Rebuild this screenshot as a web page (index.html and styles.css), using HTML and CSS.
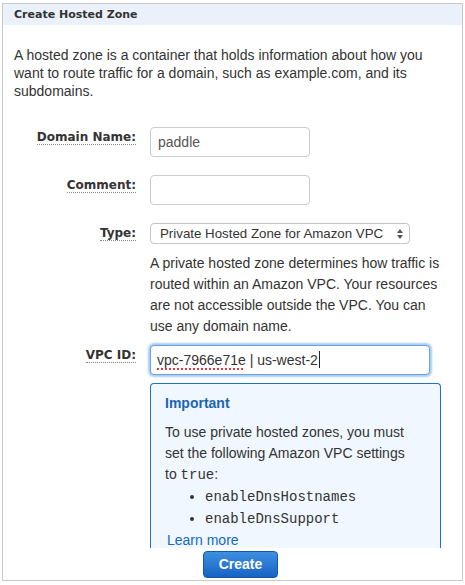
FILE: index.html
```html
<!DOCTYPE html>
<html lang="en">
<head>
<meta charset="utf-8">
<title>Create Hosted Zone</title>
<link rel="stylesheet" href="styles.css">
</head>
<body>
<div class="panel">
  <div class="panel-header">Create Hosted Zone</div>
  <p class="intro">A hosted zone is a container that holds information about how you want to route traffic for a domain, such as example.com, and its subdomains.</p>
  <div class="form">
    <div class="field field-domain">
      <div class="label"><span>Domain Name:</span></div>
      <div class="control"><div class="input input-short">paddle</div></div>
    </div>
    <div class="field field-comment">
      <div class="label"><span>Comment:</span></div>
      <div class="control"><div class="input input-short"></div></div>
    </div>
    <div class="field field-type">
      <div class="label"><span>Type:</span></div>
      <div class="control">
        <div class="select">
          <span class="select-text">Private Hosted Zone for Amazon VPC</span>
          <svg class="select-arrows" width="8" height="12" viewBox="0 0 8 12"><path d="M4 1 L7 5 L1 5 Z" fill="#555"/><path d="M4 11 L7 7 L1 7 Z" fill="#555"/></svg>
        </div>
        <p class="help">A private hosted zone determines how traffic is routed within an Amazon VPC. Your resources are not accessible outside the VPC. You can use any domain name.</p>
      </div>
    </div>
    <div class="field field-vpc">
      <div class="label"><span>VPC ID:</span></div>
      <div class="control">
        <div class="input input-focus"><span class="misspelled">vpc-7966e71e</span> | us-west-2<span class="caret"></span></div>
        <div class="notice">
          <div class="notice-title">Important</div>
          <p class="notice-text">To use private hosted zones, you must set the following Amazon VPC settings to <code>true</code>:</p>
          <ul class="notice-list">
            <li><code>enableDnsHostnames</code></li>
            <li><code>enableDnsSupport</code></li>
          </ul>
          <a class="notice-link" href="#">Learn more</a>
        </div>
      </div>
    </div>
  </div>
  <div class="actions">
    <button class="btn-primary" type="button">Create</button>
  </div>
</div>
</body>
</html>
```

FILE: styles.css
```css
* { box-sizing: border-box; }

html, body {
  margin: 0;
  padding: 0;
  background: #ffffff;
}

body {
  font-family: "Liberation Sans", Arial, Helvetica, sans-serif;
  color: #333333;
}

.panel {
  margin: 3px 0 0 2px;
  width: 461px;
  height: 578px;
  border: 1px solid #c9c9c9;
  overflow: hidden;
}

.panel-header {
  height: 21px;
  line-height: 21px;
  padding-left: 11px;
  background: #eaf1fb;
  font-family: "DejaVu Sans", Verdana, sans-serif;
  font-weight: bold;
  font-size: 11px;
  color: #333333;
}

.intro {
  margin: 21px 0 0 0;
  padding: 0 20px 0 11px;
  font-size: 14px;
  line-height: 18px;
  color: #333333;
}

.form {
  margin-top: 27px;
}

.field {
  display: flex;
  align-items: flex-start;
  gap: 14px;
}

.field-domain,
.field-comment { margin-bottom: 18px; }

.field-type { margin-bottom: 8px; }

.label {
  flex: 0 0 133px;
  text-align: right;
  padding-top: 2px;
  line-height: 16px;
  font-family: "DejaVu Sans", Verdana, sans-serif;
  font-weight: bold;
  font-size: 12px;
  color: #333333;
}

.label span {
  border-bottom: 1px dotted #8a8a8a;
}

.control {
  flex: 1 1 auto;
}

.input {
  height: 30px;
  border: 1px solid #cccccc;
  border-radius: 4px;
  padding: 0 7px;
  font-size: 14px;
  line-height: 28px;
  color: #555555;
  background: #ffffff;
  white-space: nowrap;
}

.input-short { width: 160px; }

.input-focus {
  width: 280px;
  border-color: #66a3e0;
  box-shadow: 0 0 2px 2px #a9cdf3;
  color: #333333;
  padding-left: 6px;
}

.misspelled {
  text-decoration: underline dotted #e0393e;
  text-decoration-thickness: 2px;
  text-underline-offset: 3px;
}

.caret {
  display: inline-block;
  width: 1px;
  height: 17px;
  background: #222222;
  vertical-align: -3px;
  margin-left: 1px;
}

.select {
  width: 260px;
  height: 21px;
  border: 1px solid #c4c4c4;
  border-radius: 4px;
  background: #ffffff;
  display: flex;
  align-items: center;
  justify-content: space-between;
  padding: 0 5px 0 9px;
  font-size: 13.3px;
  color: #333333;
}

.select-text {
  line-height: 19px;
}

.select-arrows { display: block; }

.help {
  margin: 9px 0 0 0;
  width: 300px;
  font-size: 14px;
  line-height: 21px;
  color: #333333;
}

.notice {
  margin-top: 8px;
  width: 291px;
  height: 165px;
  border: 1px solid #1f72c8;
  border-bottom: none;
  border-radius: 4px 4px 0 0;
  background: #f0f7fe;
  padding: 9px 24px 0 14px;
  overflow: hidden;
}

.notice-title {
  font-size: 14px;
  font-weight: bold;
  line-height: 20px;
  color: #1b63b4;
}

.notice-text {
  margin: 9px 0 0 0;
  font-size: 14px;
  line-height: 21px;
  color: #333333;
}

code {
  font-family: "Liberation Mono", "Courier New", monospace;
  font-size: 14px;
  color: #333333;
}

.notice-list {
  margin: 0;
  padding-left: 40px;
  font-size: 14px;
  line-height: 21px;
}

.notice-link {
  display: block;
  padding-left: 2px;
  font-size: 14px;
  line-height: 21px;
  color: #1469c7;
  text-decoration: none;
}

.actions {
  padding: 3px 0 0 200px;
}

.btn-primary {
  display: block;
  width: 75px;
  height: 27px;
  margin: 0;
  border: 1px solid #1458ab;
  border-radius: 4px;
  background: linear-gradient(#3d8fe2, #1763c3);
  color: #ffffff;
  font-family: "Liberation Sans", Arial, sans-serif;
  font-weight: bold;
  font-size: 14px;
  line-height: 25px;
  padding: 0;
  text-align: center;
  cursor: pointer;
}
```
